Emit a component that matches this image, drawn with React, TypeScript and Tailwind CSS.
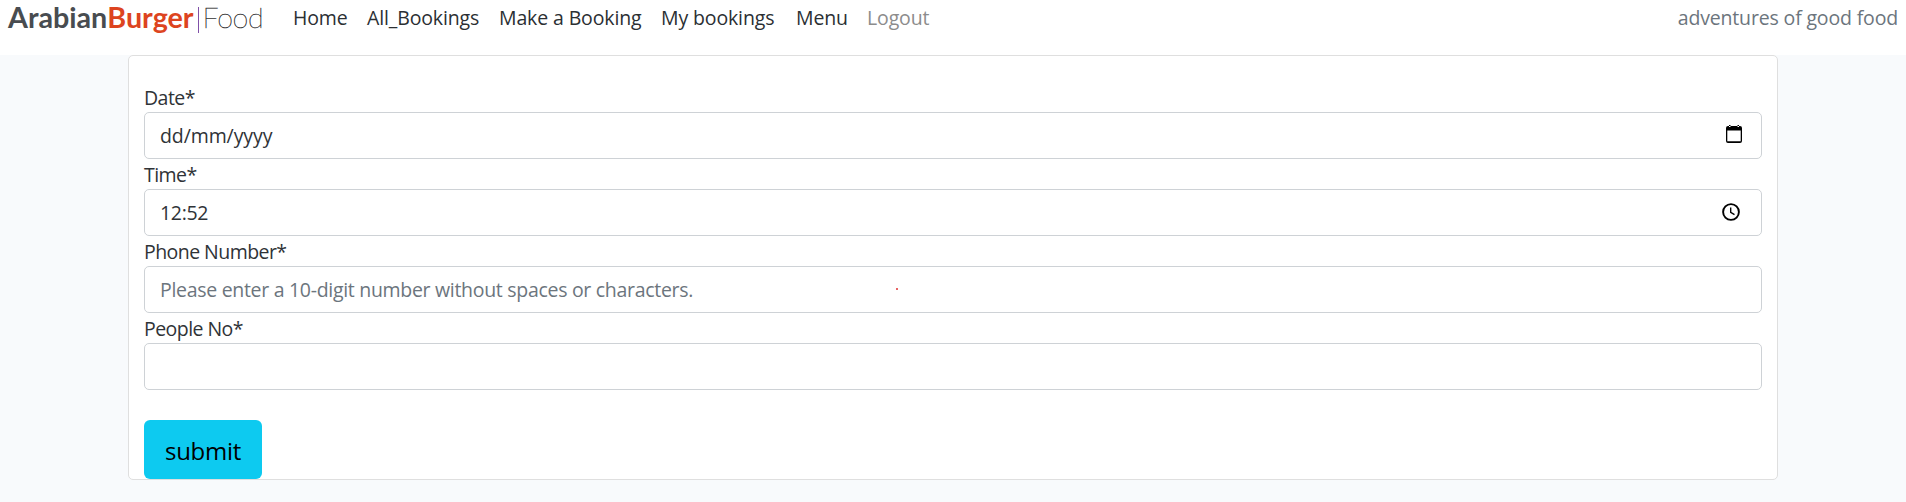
import type { ReactNode } from "react";

const links = [
  { label: "Home", cls: "w-[74px] text-[#2b2f33]" },
  { label: "All_Bookings", cls: "w-[132px] text-[#2b2f33]" },
  { label: "Make a Booking", cls: "w-[162px] text-[#2b2f33]" },
  { label: "My bookings", cls: "w-[135px] text-[#2b2f33]" },
  { label: "Menu", cls: "w-[71px] text-[#2b2f33]" },
  { label: "Logout", cls: "w-[70px] text-[#8c8c8c]" },
];

function Field({ label, children }: { label: string; children?: ReactNode }) {
  return (
    <div className="h-[77px]">
      <div className="h-[30px] whitespace-nowrap pt-px leading-[30px] tracking-[-0.55px]">{label}</div>
      <div className="relative flex h-[47px] items-center justify-between rounded-[5px] border border-[#ced2d6] bg-white pl-[15px]">
        {children}
      </div>
    </div>
  );
}

export default function App() {
  return (
    <div className="min-h-[502px] bg-[#f8fafc] font-['Open_Sans','Noto_Sans',sans-serif] text-[19.5px] tracking-[-0.3px] text-[#2f3337]">
      <nav className="flex h-[55px] items-start bg-white pl-2 pr-[8px] leading-[36px]">
        <a className="flex w-[285px] items-start whitespace-nowrap font-['Lato',sans-serif] text-[28.7px] leading-[35px] tracking-normal">
          <span className="font-bold text-[#484c50]">Arabian</span>
          <span className="font-bold text-[#dd4420]">Burger</span>
          <span className="ml-1 mr-[4px] mt-[7px] h-[26px] w-px bg-[#8050a8]" />
          <span className="font-thin tracking-[-0.4px] text-[#333] [-webkit-text-stroke:0.4px_#333]">Food</span>
        </a>
        {links.map((l) => (
          <a key={l.label} className={`shrink-0 whitespace-nowrap tracking-[-0.13px] ${l.cls}`}>
            {l.label}
          </a>
        ))}
        <span className="ml-auto whitespace-nowrap tracking-[-0.16px] text-[#6c757d]">adventures of good food</span>
      </nav>
      <main className="mx-auto h-[425px] w-[1650px] rounded-[5px] border border-[#dfdfdf] bg-white px-[15px] pt-[26px]">
        <Field label="Date*">
          <span className="pt-px tracking-[-0.1px]">dd/mm/yyyy</span>
          <svg className="mb-[3px] mr-[19px]" width="16" height="18" viewBox="0 0 16 18">
            <path d="M2 1h12a2 2 0 0 1 2 2v13a2 2 0 0 1-2 2H2a2 2 0 0 1-2-2V3a2 2 0 0 1 2-2ZM1.3 5.5v10.8h13.4V5.5ZM3 0h1.5v2H3ZM11.5 0H13v2h-1.5Z" fillRule="evenodd" />
          </svg>
        </Field>
        <Field label="Time*">
          <span className="pt-px">12:52</span>
          <svg className="mb-px mr-[21px]" width="18" height="18" viewBox="0 0 18 18" fill="none" stroke="#000">
            <circle cx="9" cy="9" r="7.9" strokeWidth="1.9" />
            <path d="M8.7 4.6v4.8l3.8 2.3" strokeWidth="1.35" />
          </svg>
        </Field>
        <Field label="Phone Number*">
          <span className="pt-px text-[#6c757d]">Please enter a 10-digit number without spaces or characters.</span>
          <i className="absolute left-[751px] top-[21px] size-[2px] rounded-full bg-[#df3030]" />
        </Field>
        <Field label="People No*" />
        <button className="mt-[30px] flex h-[59px] w-[118px] items-center justify-center rounded-[6px] bg-[#0dcaf0] pt-[2px] text-[24px] text-black">
          submit
        </button>
      </main>
    </div>
  );
}
